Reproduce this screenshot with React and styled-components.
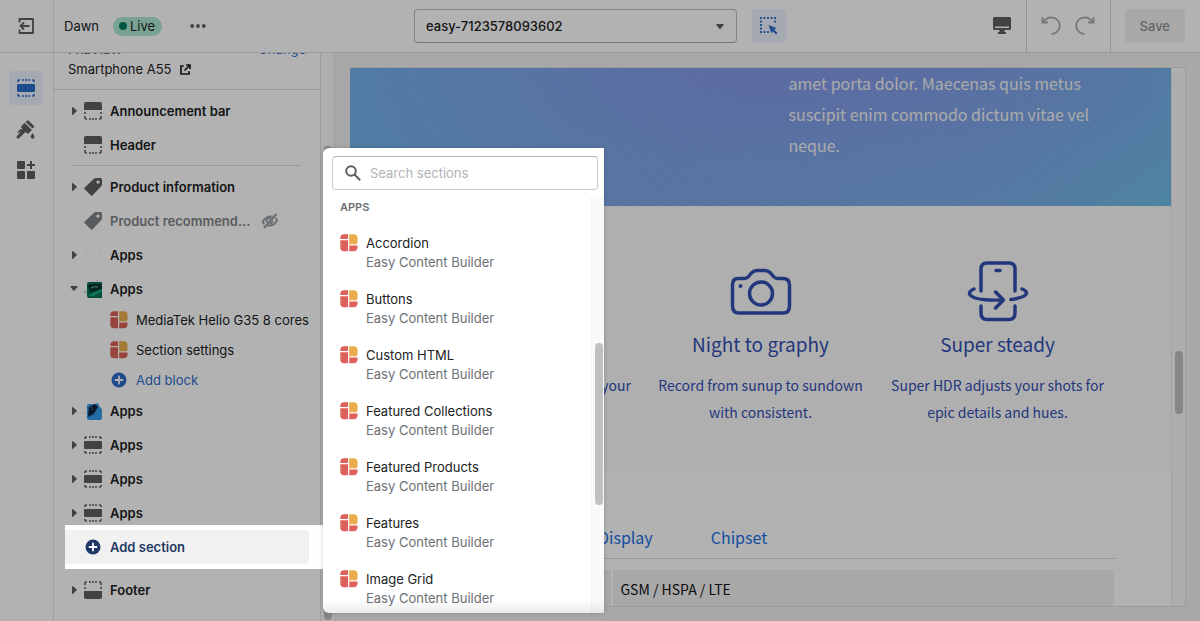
import { useState } from "react";
import styled, { createGlobalStyle } from "styled-components";

const GlobalStyle = createGlobalStyle`
  * {
    box-sizing: border-box;
  }

  body {
    margin: 0;
    overflow: hidden;
    font-family: Inter, "Liberation Sans", sans-serif;
    font-size: 13px;
    color: #202223;
  }

  button, input, select {
    font: inherit;
    color: inherit;
  }

  button {
    display: flex;
    align-items: center;
    padding: 0;
    border: none;
    background: none;
    cursor: pointer;
  }

  a {
    color: #2c6ecb;
    text-decoration: none;
  }

  svg {
    display: block;
    flex-shrink: 0;
  }
`;

const Page = styled.div`
  position: relative;
  display: flex;
  flex-direction: column;
  height: 100vh;
  overflow: hidden;
  background: #f1f1f1;
`;

const Scrim = styled.div`
  position: absolute;
  inset: 0;
  z-index: 2;
  background: rgba(0, 0, 0, 0.3);
  pointer-events: none;
`;

/* top bar */

const TopBar = styled.header`
  position: relative;
  z-index: 1;
  display: grid;
  grid-template-columns: 1fr auto 1fr;
  height: 53px;
  flex-shrink: 0;
  background: #fff;
  border-bottom: 1px solid #dcdddf;
`;

const BarGroup = styled.div`
  display: flex;
  align-items: center;
  gap: ${(props) => props.$gap || 0}px;
  justify-content: ${(props) => (props.$end ? "flex-end" : "flex-start")};
`;

const ExitButton = styled.button`
  width: 54px;
  height: 100%;
  justify-content: center;
  padding-right: 2px;
  border-right: 1px solid #e1e3e5;
  color: #5c5f62;
`;

const ThemeName = styled.span`
  margin-left: 10px;
`;

const LiveBadge = styled.span`
  display: flex;
  align-items: center;
  gap: 3px;
  height: 19px;
  margin-left: 14px;
  padding: 0 7px 0 6px;
  border-radius: 10px;
  background: #aee9d1;

  &::before {
    content: "";
    width: 8px;
    height: 8px;
    border-radius: 50%;
    background: #007f5f;
  }
`;

const MoreButton = styled.button`
  margin-left: 28px;
  color: #5c5f62;
`;

const SelectWrap = styled.div`
  position: relative;
  width: 323px;

  svg {
    position: absolute;
    top: 15px;
    right: 13px;
    color: #5c5f62;
    pointer-events: none;
  }
`;

const TemplateSelect = styled.select`
  width: 100%;
  height: 34px;
  padding: 0 11px;
  appearance: none;
  border: 1px solid #babfc3;
  border-bottom-color: #a5a9ad;
  border-radius: 4px;
  background: #fff;
  font-weight: 500;
`;

const IconTile = styled.button`
  width: 34px;
  height: 34px;
  justify-content: center;
  border-radius: 4px;
  color: ${(props) => (props.$active ? "#2c6ecb" : "#5c5f62")};
  background: ${(props) => (props.$active ? "#edf3ff" : "transparent")};
`;

const BarCell = styled.div`
  display: flex;
  align-items: center;
  gap: 14px;
  height: 100%;
  padding: 0 15px 0 14px;
  border-left: 1px solid #d2d5d8;
  color: #aaacae;

  & + & {
    margin-left: -7px;
  }
`;

const SaveButton = styled.button`
  height: 34px;
  padding: 0 15px;
  border-radius: 4px;
  background: #f1f1f1;
  color: #8c9196;
  font-weight: 500;
`;

/* workspace */

const Workspace = styled.div`
  display: flex;
  flex: 1;
  min-height: 0;
`;

const Rail = styled.nav`
  display: flex;
  flex-direction: column;
  align-items: center;
  gap: 7px;
  width: 54px;
  flex-shrink: 0;
  padding: 18px 2px 0 0;
  background: #fff;
  border-right: 1px solid #e1e3e5;
`;

const Sidebar = styled.aside`
  width: 267px;
  flex-shrink: 0;
  background: #fff;
  border-right: 1px solid #e1e3e5;
`;

const PreviewHead = styled.div`
  display: flex;
  flex-direction: column;
  height: 49px;
  margin-top: -12px;
  padding: 0 14px;
  border-bottom: 1px solid #d9dbdd;
`;

const HeadLine = styled.div`
  display: flex;
  align-items: center;
  justify-content: space-between;
  height: ${(props) => (props.$small ? 16 : 24)}px;
`;

const HeadLabel = styled.span`
  font-size: 12px;
  font-weight: 600;
  color: #6d7175;
`;

const ProductLink = styled.a`
  display: flex;
  align-items: center;
  gap: 8px;
  color: #202223;
`;

const Tree = styled.div`
  padding-top: 4px;
`;

const TreeRow = styled.div`
  display: flex;
  align-items: center;
  height: 34px;
  padding-left: 16px;
  font-weight: 600;
  color: ${(props) => (props.$muted ? "#808489" : "#202223")};
`;

const Caret = styled.button`
  width: 14px;
  height: 20px;
  color: #5c5f62;
`;

const TreeIcon = styled.span`
  display: flex;
  width: 18px;
  margin-right: 8px;
  color: ${(props) => (props.$muted ? "#808489" : "#5c5f62")};
`;

const TreeLabel = styled.span`
  margin-right: 12px;
`;

const TreeDivider = styled.hr`
  height: 1px;
  margin: 3px 19px 4px 18px;
  border: none;
  background: #dcdddf;
`;

const BlockList = styled.div`
  margin: -1px 0;
`;

const BlockRow = styled.div`
  display: flex;
  align-items: center;
  gap: 8px;
  height: 30px;
  padding-left: 56px;
  white-space: nowrap;
`;

const AddBlock = styled.button`
  gap: 8px;
  height: 30px;
  padding-left: 56px;
  color: #2c6ecb;
`;

const Spotlight = styled.div`
  position: relative;
  z-index: 3;
  margin: -5px -3px 4px 11px;
  padding: 5px 14px 5px 0;
  background: #fff;
`;

const AddSection = styled.button`
  width: 100%;
  height: 34px;
  gap: 8px;
  padding-left: 19px;
  border-radius: 0 4px 4px 0;
  background: #f1f1f1;
  color: #1f3864;
  font-weight: 600;
`;

const Gutter = styled.div`
  display: flex;
  justify-content: center;
  width: 14px;
  flex-shrink: 0;
  padding: 93px 2px 1px 3px;
  background: #fafafa;
  border-right: 1px solid #e8e8e8;
`;

const Thumb = styled.div`
  width: 8px;
  height: ${(props) => props.$height};
  border-radius: 4px;
  background: #c1c1c1;
`;

/* storefront preview */

const Canvas = styled.main`
  flex: 1;
  min-width: 0;
  padding: 14px 14px 14px 15px;
`;

const Frame = styled.div`
  display: flex;
  height: 100%;
  overflow: hidden;
  border: 1px solid #dfe0e1;
  border-left: none;
  background: #fff;
  font-family: "Noto Sans CJK JP", "Open Sans", sans-serif;
`;

const Storefront = styled.div`
  flex: 1;
  min-width: 0;
`;

const FrameScroll = styled.div`
  display: flex;
  align-items: flex-start;
  justify-content: center;
  width: 14px;
  padding-top: 283px;
  border-left: 1px solid #e8e8e8;
  background: #fafafa;
`;

const Hero = styled.section`
  height: 138px;
  display: grid;
  grid-template-columns: 1fr 1fr;
  background:
    repeating-linear-gradient(45deg, rgba(255, 255, 255, 0.04) 0 2px, transparent 2px 4px),
    radial-gradient(ellipse at 58% 0%, rgba(132, 148, 232, 0.8), rgba(124, 162, 236, 0.4) 55%, transparent 85%),
    linear-gradient(100deg, #70b4ea, #7ea4e8 40%, #78aee8 78%, #6cbce6);
`;

const HeroText = styled.p`
  grid-column: 2;
  margin: 0;
  padding: 0 60px 0 28px;
  font-size: 16px;
  line-height: 31px;
  color: #f4f4f4;
`;

const Features = styled.section`
  display: grid;
  grid-template-columns: repeat(3, 1fr);
  height: 265px;
  padding: 54px 55px 0;
  background: #fbfbfb;
  color: #334fb4;
  text-align: center;
`;

const Feature = styled.article`
  display: flex;
  flex-direction: column;
  align-items: ${(props) => (props.$end ? "flex-end" : "center")};
  padding: 0 ${(props) => (props.$end ? 11 : 8)}px;

  h3 {
    margin: 6px 0 14px;
    font-size: 19px;
    line-height: 28px;
    font-weight: 400;
  }

  p {
    margin: 0;
    font-size: 14px;
    line-height: 27px;
  }
`;

const FeatureIcon = styled.span`
  display: flex;
  height: 64px;
`;

const FeatureCopy = styled.p`
  padding-top: ${(props) => (props.$bare ? 112 : 0)}px;
`;

const Specs = styled.section`
  padding: 47px 55px 0;
`;

const SpecTabs = styled.div`
  display: flex;
  gap: 58px;
  height: 41px;
  padding: 6px 0 0 193px;
  border-bottom: 1px solid #d6d8da;
  font-size: 16px;
  line-height: 26px;

  a {
    color: #1a6fe8;
  }
`;

const SpecTable = styled.table`
  width: 100%;
  margin-top: 9px;
  border-collapse: separate;
  border-spacing: 2px;

  td {
    height: 38px;
    padding: 0 7px;
    background: #f1f1f1;
    font-size: 14px;
    line-height: 20px;
    color: #121212;
  }

  td:first-child {
    width: 29%;
  }
`;

/* section picker */

const Picker = styled.div`
  position: absolute;
  top: 148px;
  bottom: 8px;
  left: 323px;
  z-index: 4;
  display: flex;
  flex-direction: column;
  width: 281px;
  overflow: hidden;
  border-radius: 6px 0 0 6px;
  background: #fff;
  box-shadow: 0 0 4px rgba(0, 0, 0, 0.2);
`;

const SearchBox = styled.label`
  display: flex;
  align-items: center;
  gap: 9px;
  height: 34px;
  flex-shrink: 0;
  margin: 8px 6px 7px 9px;
  padding: 0 12px;
  border: 1px solid #c9cccf;
  border-top-color: #aeb4b9;
  border-radius: 4px;
  color: #5c5f62;

  input {
    flex: 1;
    min-width: 0;
    padding: 0;
    border: none;
    outline: none;
    background: none;
  }

  input::placeholder {
    color: #b0b4b8;
  }
`;

const PickerBody = styled.div`
  display: flex;
  flex: 1;
  min-height: 0;
`;

const PickerList = styled.div`
  flex: 1;
  overflow: hidden;
  padding-left: 17px;
`;

const PickerTitle = styled.h2`
  margin: 0 0 17px;
  font-size: 11px;
  line-height: 20px;
  font-weight: 600;
  color: #6d7175;
`;

const PickerItem = styled.button`
  align-items: flex-start;
  gap: 8px;
  width: 100%;
  height: 56px;
  text-align: left;
  line-height: 19px;
`;

const ItemText = styled.span`
  display: flex;
  flex-direction: column;

  small {
    font-size: 13px;
    color: #6d7175;
  }
`;

const PickerScroll = styled.div`
  width: 13px;
  padding: 146px 1px 0 3px;
  background: #fafafa;
  border-left: 1px solid #f3f3f3;
`;

const PickerFade = styled.div`
  position: absolute;
  right: 0;
  bottom: 0;
  left: 0;
  height: 14px;
  background: linear-gradient(transparent, rgba(0, 0, 0, 0.08));
  pointer-events: none;
`;

/* icons */

const SectionIcon = () => (
  <svg width="18" height="18" viewBox="0 0 18 18">
    <path d="M1 3V2Q1 1 2 1H3M5 1h2M8 1h2M11 1h2M15 1h1Q17 1 17 2V3M1 15v1Q1 17 2 17H3M5 17h2M8 17h2M11 17h2M15 17h1Q17 17 17 16V15" fill="none" stroke="currentColor" strokeWidth="1.6" />
    <rect y="5" width="18" height="8" rx="1" fill="currentColor" />
  </svg>
);

const HeaderIcon = () => (
  <svg width="18" height="18" viewBox="0 0 18 18">
    <path d="M0 8V2Q0 0 2 0H16Q18 0 18 2V8Z" fill="currentColor" />
    <path d="M1 10v2M17 10v2M1 14v2Q1 17 2 17H3M5 17h2M8 17h2M11 17h2M15 17h1Q17 17 17 16V14" fill="none" stroke="currentColor" strokeWidth="1.6" />
  </svg>
);

const FooterIcon = () => (
  <svg width="18" height="18" viewBox="0 0 18 18">
    <path d="M0 10V16Q0 18 2 18H16Q18 18 18 16V10Z" fill="currentColor" />
    <path d="M1 6v2M17 6v2M1 4V2Q1 1 2 1H3M5 1h2M8 1h2M11 1h2M15 1h1Q17 1 17 2V4" fill="none" stroke="currentColor" strokeWidth="1.6" />
  </svg>
);

const TagIcon = () => (
  <svg width="18" height="18" viewBox="0 0 18 18">
    <path
      fill="currentColor"
      fillRule="evenodd"
      d="M10 .8Q10.600 0 11.600 0H16.500Q18 0 18 1.500V6.500Q18 7.500 17.200 8.300L8.600 17.300Q7.700 18.300 6.700 17.300L.700 11.300Q-.300 10.300 .700 9.400ZM14 5.800A1.700 1.700 0 1 0 14 2.400A1.700 1.700 0 1 0 14 5.800Z"
    />
  </svg>
);

const AppIcon = () => (
  <svg width="18" height="18" viewBox="0 0 18 18">
    <path d="M4 .3H8V5H.3V4Q.3 .3 4 .3Z" fill="#dd6259" />
    <path d="M.3 6.200H8V17.300H4Q.3 17.300 .3 13.600Z" fill="#dd6259" />
    <path d="M9.200 .3H13.800Q17.500 .3 17.500 4V8.300Q17.500 10.300 15.500 10.300H9.200Z" fill="#e8ae4d" />
    <path d="M9.200 11.500H17.500V13.600Q17.500 17.300 13.800 17.300H9.200Z" fill="#dd6259" />
  </svg>
);

const PlusIcon = () => (
  <svg width="18" height="18" viewBox="0 0 18 18">
    <circle cx="9" cy="9" r="7.500" fill="currentColor" />
    <path d="M9 5.500v7M5.500 9h7" stroke="#fff" strokeWidth="1.800" strokeLinecap="round" />
  </svg>
);

const GhostIcon = () => (
  <svg width="18" height="18" viewBox="0 0 18 18" fill="none" stroke="#f7f7f7">
    <rect x="2" y="2" width="14" height="14" rx="3" />
    <path d="M6 5l5 3-3 5" />
  </svg>
);

const GreenPhone = () => (
  <svg width="18" height="18" viewBox="0 0 18 18">
    <rect x="3" y="2" width="16" height="16" rx="2" fill="#067358" />
    <path d="M4 5L17 3L18 9L6 13Z" fill="#04382f" />
    <path d="M6 14L18 9V11L10 16H5Z" fill="#14a878" />
    <path d="M4 3.500h13" stroke="#0a6350" />
    <path d="M7 8q3-2 7-1" stroke="#7fb5ac" fill="none" />
    <circle cx="1" cy="12" r="1" fill="#7fc4ad" />
    <circle cx="13" cy=".5" r="1" fill="#d5dedb" />
  </svg>
);

const BluePhone = () => (
  <svg width="18" height="18" viewBox="0 0 18 18">
    <path d="M3 4Q3 2 5 2H11L14 1L15 4L18 7V16Q18 18 16 18H5Q3 18 3 16Z" fill="#349be8" />
    <path d="M5 5L11 2L14 5L9 13L4 14Z" fill="#0d2038" />
    <path d="M6 6l3-1M7 8l3-1" stroke="#3c5878" />
    <path d="M4 15l7-4" stroke="#1c62a8" />
    <circle cx="1.500" cy="11" r=".8" fill="#9ec3e6" />
  </svg>
);

const HiddenIcon = () => (
  <svg width="16" height="16" viewBox="0 0 16 16" fill="none" stroke="#9a9ea3" strokeWidth="1.900">
    <path d="M2.500 11.500Q0 9 1.500 7.500Q5 2.500 10.500 3.500M13.500 5Q15.700 7 14.500 8.500Q11 13.500 5.500 12.500" />
    <path d="M5.500 9.500A2.500 2.500 0 0 1 9 5.800M10.500 7.500A2.500 2.500 0 0 1 7.500 10.500" />
    <path d="M14.500 1L2 15" />
  </svg>
);

const CaretIcon = ({ open }) => (
  <svg width="10" height="10" viewBox="0 0 10 10" fill="currentColor">
    {open ? <path d="M.5 3Q0 2 1 2H7Q8 2 7.500 3L4.600 6.500Q4 7 3.400 6.500Z" /> : <path d="M2 1.500Q2 .500 3 1.200L6.500 4.300Q7 5 6.500 5.600L3 8.800Q2 9.500 2 8.500Z" />}
  </svg>
);

const SelectArrow = () => (
  <svg width="8" height="6" viewBox="0 0 8 6" fill="currentColor">
    <path d="M.8 0H7.200Q8.300 0 7.600 1L4.700 4.700Q4 5.500 3.300 4.700L.4 1Q-.300 0 .8 0Z" />
  </svg>
);

const ExitIcon = () => (
  <svg width="16" height="16" viewBox="0 0 16 16" fill="none" stroke="currentColor" strokeWidth="1.800">
    <path d="M1.500 4.500V1H15V15H1.500V11.500" strokeLinejoin="round" />
    <path d="M11.500 8H2.500M6 4.500L2.500 8L6 11.500" />
  </svg>
);

const DotsIcon = () => (
  <svg width="16" height="4" viewBox="0 0 16 4" fill="currentColor">
    <circle cx="2.200" cy="2" r="1.900" />
    <circle cx="8" cy="2" r="1.900" />
    <circle cx="13.800" cy="2" r="1.900" />
  </svg>
);

const InspectIcon = () => (
  <svg width="18" height="18" viewBox="0 0 18 18" fill="currentColor">
    {[1, 4.5, 8, 11.5, 15].map((p) => (
      <rect key={`t${p}`} x={p - 1} y="0" width="2" height="2" rx=".5" />
    ))}
    {[4.5, 8, 11.5, 15].map((p) => (
      <rect key={`l${p}`} x="0" y={p - 1} width="2" height="2" rx=".5" />
    ))}
    <rect x="3.500" y="14" width="2" height="2" rx=".5" />
    <rect x="7" y="14" width="2" height="2" rx=".5" />
    <rect x="14" y="3.500" width="2" height="2" rx=".5" />
    <path d="M8.500 8L16.500 11L14.300 12.700L17.500 16L16 17.500L12.800 14.300L11.500 16.500Z" />
  </svg>
);

const DesktopIcon = () => (
  <svg width="18" height="18" viewBox="0 0 18 18" fill="#5c5f62">
    <path fillRule="evenodd" d="M1.500 0H16.500Q18 0 18 1.500V11.500Q18 13 16.500 13H11.500V15H13V17H5V15H6.500V13H1.500Q0 13 0 11.500V1.500Q0 0 1.500 0ZM2 9.500V11H16V9.500Z" />
  </svg>
);

const UndoIcon = ({ flip }) => (
  <svg width="20" height="20" viewBox="0 0 20 20" fill="none" stroke="currentColor" strokeWidth="1.900">
    <g transform={flip ? "translate(20 0) scale(-1 1)" : undefined}>
      <path d="M1.500 1V6.500H7" />
      <path d="M2 6.200Q5.500 1.500 10.500 1.500A8.200 8.200 0 0 1 10.500 18" />
    </g>
  </svg>
);

const BrushIcon = () => (
  <svg width="19" height="19" viewBox="0 0 19 19" fill="currentColor">
    <path d="M9.500 2L11.500 .500Q12 0 12.500 .500L18 6Q18.500 6.500 18 7L16.500 8.500Z" />
    <path d="M8.500 2.800L16 10L13 13Q12 14 10.800 13L9.500 12L3 18.200Q2 19 1 18.200Q.200 17.200 1 16L6.800 9.500L5.500 8Q4.800 7 5.500 6Z" />
    <path d="M1 13Q3 9 6 9L8 11Z" />
    <path d="M16.500 13Q18.500 15.500 18.500 16.800A1.900 1.900 0 0 1 14.700 16.800Q14.700 15.500 16.500 13Z" />
  </svg>
);

const AppsIcon = () => (
  <svg width="18" height="18" viewBox="0 0 18 18" fill="currentColor">
    <rect width="8" height="8" rx="1" />
    <rect y="10" width="8" height="8" rx="1" />
    <rect x="10" y="10" width="8" height="8" rx="1" />
    <path d="M13 0h2v3h3v2h-3v3h-2V5h-3V3h3Z" />
  </svg>
);

const ExternalIcon = () => (
  <svg width="11" height="11" viewBox="0 0 11 11" fill="none" stroke="currentColor" strokeWidth="1.700">
    <path d="M3.800 2H1V10H9V7.200M6 1H10V5M10 1L4.500 6.500" />
  </svg>
);

const SearchIcon = () => (
  <svg width="16" height="16" viewBox="0 0 16 16" fill="none" stroke="currentColor" strokeWidth="2">
    <circle cx="6" cy="6" r="4.800" />
    <path d="M9.500 9.500L15.200 15.200" />
  </svg>
);

const CameraIcon = () => (
  <svg width="62" height="62" viewBox="0 0 62 62" fill="none" stroke="currentColor" strokeWidth="3.500">
    <path d="M8 18.500H14Q17 18.500 19 16L21.500 13Q24 10.500 27 10.500H35Q38 10.500 40.500 13L43 16Q45 18.500 48 18.500H53Q59.500 18.500 59.500 25V46Q59.500 53 53 53H9Q2.500 53 2.500 46V25Q2.500 18.500 8 18.500Z" />
    <circle cx="31" cy="33.500" r="11.500" />
    <circle cx="10.500" cy="26" r="2" fill="currentColor" stroke="none" />
  </svg>
);

const SteadyIcon = () => (
  <svg width="62" height="62" viewBox="0 0 62 62" fill="none" stroke="currentColor" strokeWidth="3.500" strokeLinecap="round" strokeLinejoin="round">
    <path d="M14 31V9Q14 3 20 3H42Q48 3 48 9V31" />
    <path d="M14 46V53Q14 59.500 20 59.500H42Q48 59.500 48 53V46" />
    <path d="M29 10.500H33" />
    <path d="M7 29Q2 31 2.500 34Q6 41 35 40M28.500 32L36.500 40L28.500 48" />
    <path d="M55 29Q60 31 59.500 33.500Q58 37.500 44 39.500" />
  </svg>
);

const topSections = [
  { label: "Announcement bar", icon: HeaderIcon, caret: true },
  { label: "Header", icon: HeaderIcon },
];

const productSections = [
  { label: "Product information", icon: TagIcon, caret: true },
  { label: "Product recommend...", icon: TagIcon, hidden: true },
  { label: "Apps", icon: GhostIcon, caret: true },
  { label: "Apps", icon: GreenPhone, caret: true, open: true },
];

const appSections = [
  { label: "Apps", icon: BluePhone, caret: true },
  { label: "Apps", icon: SectionIcon, caret: true },
  { label: "Apps", icon: SectionIcon, caret: true },
  { label: "Apps", icon: SectionIcon, caret: true },
];

const pickerItems = [
  "Accordion",
  "Buttons",
  "Custom HTML",
  "Featured Collections",
  "Featured Products",
  "Features",
  "Image Grid",
];

const Section = ({ label, icon: Icon, caret, open, hidden }) => (
  <TreeRow $muted={hidden}>
    {caret ? (
      <Caret aria-label={`Toggle ${label}`}>
        <CaretIcon open={open} />
      </Caret>
    ) : (
      <Caret as="span" />
    )}
    <TreeIcon $muted={hidden}>
      <Icon />
    </TreeIcon>
    <TreeLabel>{label}</TreeLabel>
    {hidden && <HiddenIcon />}
  </TreeRow>
);

const Header = () => (
  <TopBar>
    <BarGroup>
      <ExitButton aria-label="Exit">
        <ExitIcon />
      </ExitButton>
      <ThemeName>Dawn</ThemeName>
      <LiveBadge>Live</LiveBadge>
      <MoreButton aria-label="More actions">
        <DotsIcon />
      </MoreButton>
    </BarGroup>
    <BarGroup $gap={15}>
      <SelectWrap>
        <TemplateSelect aria-label="Template">
          <option>easy-7123578093602</option>
        </TemplateSelect>
        <SelectArrow />
      </SelectWrap>
      <IconTile $active aria-label="Inspector">
        <InspectIcon />
      </IconTile>
    </BarGroup>
    <BarGroup $gap={7} $end>
      <IconTile aria-label="Desktop view">
        <DesktopIcon />
      </IconTile>
      <BarCell>
        <UndoIcon />
        <UndoIcon flip />
      </BarCell>
      <BarCell>
        <SaveButton>Save</SaveButton>
      </BarCell>
    </BarGroup>
  </TopBar>
);

const SectionPicker = () => {
  const [query, setQuery] = useState("");
  const items = pickerItems.filter((item) => item.toLowerCase().includes(query.toLowerCase()));

  return (
    <Picker>
      <SearchBox>
        <SearchIcon />
        <input
          type="text"
          aria-label="Search sections"
          placeholder="Search sections"
          value={query}
          onChange={(event) => setQuery(event.target.value)}
        />
      </SearchBox>
      <PickerBody>
        <PickerList>
          <PickerTitle>APPS</PickerTitle>
          {items.map((item) => (
            <PickerItem key={item}>
              <AppIcon />
              <ItemText>
                {item}
                <small>Easy Content Builder</small>
              </ItemText>
            </PickerItem>
          ))}
        </PickerList>
        <PickerScroll>
          <Thumb $height="162px" />
        </PickerScroll>
      </PickerBody>
      <PickerFade />
    </Picker>
  );
};

const App = () => (
  <>
    <GlobalStyle />
    <Page>
      <Header />
      <Workspace>
        <Rail>
          <IconTile $active aria-label="Sections">
            <SectionIcon />
          </IconTile>
          <IconTile aria-label="Theme settings">
            <BrushIcon />
          </IconTile>
          <IconTile aria-label="App embeds">
            <AppsIcon />
          </IconTile>
        </Rail>
        <Sidebar>
          <PreviewHead>
            <HeadLine $small>
              <HeadLabel>PREVIEW</HeadLabel>
              <a href="#change">Change</a>
            </HeadLine>
            <HeadLine>
              <ProductLink href="#product">
                Smartphone A55
                <ExternalIcon />
              </ProductLink>
            </HeadLine>
          </PreviewHead>
          <Tree>
            {topSections.map((section, i) => (
              <Section key={i} {...section} />
            ))}
            <TreeDivider />
            {productSections.map((section, i) => (
              <Section key={i} {...section} />
            ))}
            <BlockList>
              <BlockRow>
                <AppIcon />
                MediaTek Helio G35 8 cores
              </BlockRow>
              <BlockRow>
                <AppIcon />
                Section settings
              </BlockRow>
              <AddBlock>
                <PlusIcon />
                Add block
              </AddBlock>
            </BlockList>
            {appSections.map((section, i) => (
              <Section key={i} {...section} />
            ))}
            <Spotlight>
              <AddSection>
                <PlusIcon />
                Add section
              </AddSection>
            </Spotlight>
            <Section label="Footer" icon={FooterIcon} caret />
          </Tree>
        </Sidebar>
        <Gutter>
          <Thumb $height="100%" />
        </Gutter>
        <Canvas>
          <Frame>
            <Storefront>
              <Hero>
                <HeroText>
                  amet porta dolor. Maecenas quis metus suscipit enim commodo dictum vitae vel neque.
                </HeroText>
              </Hero>
              <Features>
                <Feature $end>
                  <FeatureCopy $bare>your</FeatureCopy>
                </Feature>
                <Feature>
                  <FeatureIcon>
                    <CameraIcon />
                  </FeatureIcon>
                  <h3>Night to graphy</h3>
                  <FeatureCopy>Record from sunup to sundown with consistent.</FeatureCopy>
                </Feature>
                <Feature>
                  <FeatureIcon>
                    <SteadyIcon />
                  </FeatureIcon>
                  <h3>Super steady</h3>
                  <FeatureCopy>Super HDR adjusts your shots for epic details and hues.</FeatureCopy>
                </Feature>
              </Features>
              <Specs>
                <SpecTabs>
                  <a href="#display">Display</a>
                  <a href="#chipset">Chipset</a>
                </SpecTabs>
                <SpecTable>
                  <tbody>
                    <tr>
                      <td />
                      <td>GSM / HSPA / LTE</td>
                    </tr>
                  </tbody>
                </SpecTable>
              </Specs>
            </Storefront>
            <FrameScroll>
              <Thumb $height="63px" />
            </FrameScroll>
          </Frame>
        </Canvas>
      </Workspace>
      <Scrim />
      <SectionPicker />
    </Page>
  </>
);

export default App;
